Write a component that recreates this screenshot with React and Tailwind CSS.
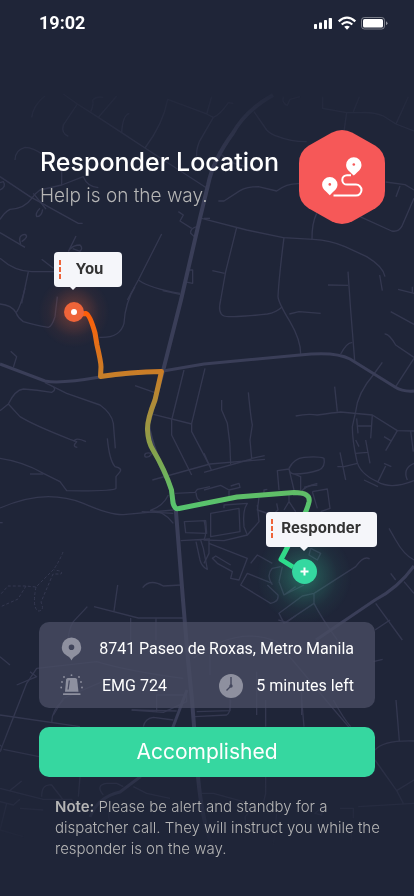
const minorRoads = [
  {
    offset: 'translate(0 0) scale(0.33333)',
    paths: [
      'M135 288Q100 315 95 352', 'M190 282L232 312L295 352L365 398L435 444L620 564', 'M232 312L190 375Q183 400 205 409',
      'M272 335Q282 315 278 300Q290 288 310 292', 'M295 352L350 288', 'M365 398Q368 345 388 340',
      'M435 444Q490 370 503 298L620 342L640 352L598 425Q588 450 590 470', 'M640 352Q660 345 685 308L700 310', 'M620 342L635 290',
      'M762 335L800 390Q815 405 835 410Q870 425 920 425', 'M850 290Q845 310 862 316L870 298L900 290', 'M968 290V325L1040 338H1080Q1120 335 1150 348L1188 372L1242 393',
      'M1040 338L1032 395', 'M1060 335L1078 290', 'M1188 372L1225 290',
      'M45 480Q45 450 75 442Q100 442 130 465', 'M0 530L90 590L235 670H248', 'M185 510V555L120 570Q105 580 95 595Q75 625 30 628Q15 635 0 658',
      'M185 555L250 530Q262 560 295 563', 'M100 580L138 627', 'M120 625Q105 640 110 650Q125 650 128 628', 'M0 570Q20 560 10 545L0 548',
      'M655 603H672L720 572Q740 560 775 560L830 573Q860 550 897 551', 'M1157 546L1215 554L1242 570', 'M1200 558L1188 590',
      'M1242 595L1205 680Q1195 697 1175 693L1080 650', 'M950 640Q935 670 936 720',
      'M535 635L550 645L540 663L575 685', 'M590 680Q570 685 572 700L585 712', 'M655 455Q690 490 720 495L775 515', 'M605 655L740 690L850 713L940 718Q990 720 1035 740L1100 770Q1150 800 1155 830',
    ],
  },
  {
    offset: 'translate(0 90) scale(0.33333)',
    paths: [
      'M0 428L75 472', 'M62 462Q52 435 75 433Q88 440 65 455', 'M228 438L205 485', 'M210 478Q220 465 240 465Q250 475 240 484L218 476',
      'M0 505Q45 545 95 545H165', 'M85 545L65 640', 'M125 508L160 535', 'M485 432L415 570L382 630', 'M415 570Q450 595 540 610', 'M560 540H578V580L552 575', 'M612 385H630',
      'M172 620L165 680Q155 710 145 712Q100 705 70 695Q55 685 48 668Q35 645 0 642', 'M48 668Q60 655 75 595', 'M405 590Q375 640 372 700Q360 745 298 742',
      'M488 602L540 613', 'M32 784L50 800L40 832',
    ],
  },
  {
    offset: 'translate(204 90) scale(0.33333)',
    paths: [
      'M98 412L65 545L50 630Q40 670 60 678Q75 684 190 672Q215 668 235 650', 'M25 542L62 550', 'M240 442Q225 560 222 620Q224 640 258 695Q290 750 290 792',
      'M350 670L285 665L256 672', 'M527 555L535 602', 'M432 545L440 660L452 812', 'M372 585L432 586', 'M582 598L630 610M625 590V610',
    ],
  },
  {
    offset: 'translate(0 290) scale(0.33333)',
    paths: [
      'M135 278L200 310L300 345Q335 370 340 400L346 475', 'M0 362L25 342Q45 300 70 297Q110 300 155 307Q170 300 160 290', 'M25 342L60 380Q100 405 210 448L230 455Q215 470 232 472',
      'M222 455Q225 440 258 455', 'M322 445Q328 510 345 530Q370 535 358 548L348 560V595Q340 604 200 602L180 575Q150 560 130 550Q70 515 0 505', 'M90 552H130',
      'M552 240L515 390V435L575 555', 'M615 235L575 400V425L630 530', 'M405 287L465 308', 'M460 373L575 402', 'M455 490Q430 485 435 500Q445 505 455 492', 'M457 570L630 522L795 508',
    ],
  },
  {
    offset: 'translate(204 290) scale(0.33333)',
    paths: [
      'M410 192Q430 155 445 158', 'M535 217L510 252Q460 310 455 365L445 410Q445 450 458 510Q465 550 520 575Q560 600 630 572', 'M560 65L630 103', 'M542 132Q555 130 575 165L630 202',
      'M630 205L575 290', 'M275 378Q310 370 340 375Q390 368 410 366L505 375L580 422L630 423', 'M392 290L400 365', 'M505 375L500 445M460 408H502', 'M580 422L545 482M540 440L560 452',
      'M620 423L628 485', 'M133 307Q140 380 145 405L138 450L143 505L182 497', 'M53 330V360L70 400Q80 460 80 522', 'M0 490L22 540', 'M0 547L143 507',
      'M408 487L425 570M400 530H420L460 520', 'M458 385L462 430M455 450L465 470M455 490L490 487M485 450L498 520', 'M540 520L562 530M545 528L522 575M480 570L522 590',
      'M610 570Q595 535 630 520', 'M255 535Q270 505 300 502Q345 498 360 505Q365 530 345 540Q310 552 270 552Q255 550 255 535M255 537L220 542L225 600M255 537L270 600M270 552L290 560V600M300 592L340 580',
    ],
  },
  {
    offset: 'translate(0 460) scale(0.33333)',
    paths: [
      'M0 144Q80 110 145 110Q200 110 250 130Q330 165 370 164Q410 160 520 150', 'M450 152Q490 150 520 190M450 152Q490 138 505 105', 'M425 155L520 160',
      'M525 100L585 97L592 88L630 80M588 98Q590 120 600 122', 'M553 185L617 182L620 220L557 218Z', 'M542 242L630 237M588 245L600 300Q605 320 622 328L610 265L602 240',
      'M543 375L490 378Q450 355 428 383', 'M353 375L342 453', 'M282 440L415 474H550', 'M392 474V540M468 474V540', 'M262 440L220 485Q205 510 205 540', 'M0 188H8',
    ],
  },
  {
    offset: 'translate(204 460) scale(0.33333)',
    paths: [
      'M0 90L50 76L75 90L108 82L105 70L80 78', 'M20 160L105 145L108 215L20 230Z', 'M0 180Q10 220 0 240L60 242L130 225L165 185L160 135', 'M60 145V135L130 130Q115 150 120 200L130 225', 'M75 92V112',
      'M180 108V90L190 88M165 112L160 150L205 165L222 150L218 130M240 150L255 125L275 155M255 105V125', 'M325 95L370 87L378 145L350 155M325 95L340 145',
      'M15 240V280L0 310M15 250L130 295L105 360L80 355L85 335L40 310L25 295L35 288L80 315', 'M140 310L160 285L205 310M205 370L130 340L110 375L200 430Q225 425 222 405L190 375',
      'M205 375Q185 345 205 325L230 320M225 365L235 320M225 365L240 405L275 380M300 375L240 405', 'M320 265L350 280L340 300L315 285L320 265', 'M497 297Q480 285 455 320L330 400L295 408L225 460L240 490L330 430V400',
      'M330 430Q350 470 400 540', 'M555 205L575 240Q600 285 630 300', 'M560 340L575 360M600 365L630 400', 'M515 430L595 540', 'M290 100Q300 75 340 75',
    ],
  },
  {
    offset: 'translate(30 615) scale(0.33333)',
    paths: [
      'M-90 125L-60 150M-90 410L-10 205L20 160L200 140Q300 170 460 190', 'M490 130Q620 30 740 80L800 150L900 270L960 340', 'M1058 133L1030 140', 'M680 170V300M815 230V300', 'M0 170L20 185L-40 210', 'M70 300L100 250L240 190',
      'M305 285L400 292L470 260V240H380V290', 'M500 290L600 287V250', 'M745 15L770 22L800 0', 'M1035 45L1080 15', 'M540 120V180',
    ],
  },
  {
    offset: 'translate(0 700) scale(0.33333)',
    paths: [
      'M0 45L240 80', 'M155 68Q155 30 190 0', 'M395 30L530 33', 'M430 80Q435 55 460 52L520 60', 'M585 50L680 45Q692 40 692 0', 'M797 0V80', 'M905 0L912 80', 'M1000 0Q1030 55 1052 80',
      'M1188 0L1198 122M1125 150Q1150 120 1242 123M1125 180L1190 272L1210 310M1190 272L1242 240M1075 320L1242 310', 'M0 155Q10 140 0 135M10 148L117 170',
      'M0 265L130 298H215L230 330M28 273L65 243M125 290Q125 250 155 255L190 300', 'M240 230L235 290', 'M0 305L40 315L60 298M60 325L130 330M20 310L0 390L70 410', 'M310 285Q285 255 320 250H350L370 260M400 260L440 280L510 295',
      'M605 280H640L730 305Q760 330 735 350L740 400M797 230V280L790 310', 'M945 340L970 320L965 345ZM1020 325H1060V355M1055 370V425', 'M330 320Q310 390 390 400', 'M820 435L830 340',
    ],
  },
]

const dottedTrails = ['M63 552Q60 560 54 569L36 587L26 586H8L0 595', 'M36 587Q32 607 38 611Q45 611 41 602L53 574H61Q64 571 54 570', 'M26 586L18 599L0 607']

function CityMap() {
  return (
    <svg className="absolute inset-0 h-full w-full" viewBox="0 0 414 896" fill="none" aria-hidden="true">
      <defs>
        <linearGradient id="edgeFade" x1="0" y1="0" x2="0" y2="896" gradientUnits="userSpaceOnUse">
          <stop offset="0.08" stopColor="#fff" stopOpacity="0" />
          <stop offset="0.22" stopColor="#fff" />
          <stop offset="0.8" stopColor="#fff" />
          <stop offset="0.95" stopColor="#fff" stopOpacity="0" />
        </linearGradient>
        <mask id="mapMask" maskUnits="userSpaceOnUse" x="0" y="0" width="414" height="896">
          <rect width="414" height="896" fill="url(#edgeFade)" />
        </mask>
        <linearGradient id="routeColor" x1="0" y1="313" x2="0" y2="560" gradientUnits="userSpaceOnUse">
          <stop offset="0" stopColor="#ff5e08" />
          <stop offset="0.24" stopColor="#c97d27" />
          <stop offset="0.43" stopColor="#a39340" />
          <stop offset="0.56" stopColor="#86a24c" />
          <stop offset="0.72" stopColor="#61bc66" />
          <stop offset="0.8" stopColor="#55c670" />
          <stop offset="1" stopColor="#2ddd8c" />
        </linearGradient>
        <radialGradient id="orangeGlow">
          <stop offset="0" stopColor="#f06236" stopOpacity="0.4" />
          <stop offset="0.35" stopColor="#f06236" stopOpacity="0.22" />
          <stop offset="0.7" stopColor="#f06236" stopOpacity="0.05" />
          <stop offset="1" stopColor="#f06236" stopOpacity="0" />
        </radialGradient>
        <radialGradient id="greenGlow">
          <stop offset="0" stopColor="#36d9a1" stopOpacity="0.4" />
          <stop offset="0.35" stopColor="#36d9a1" stopOpacity="0.2" />
          <stop offset="0.7" stopColor="#36d9a1" stopOpacity="0.05" />
          <stop offset="1" stopColor="#36d9a1" stopOpacity="0" />
        </radialGradient>
      </defs>
      <g mask="url(#mapMask)" strokeLinejoin="round">
        <g stroke="#343850" strokeWidth="4">
          {minorRoads.map((area) => (
            <g key={area.offset} transform={area.offset}>
              {area.paths.map((d) => <path key={d} d={d} />)}
            </g>
          ))}
        </g>
        <g stroke="#343850" strokeDasharray="3 2">
          {dottedTrails.map((d) => <path key={d} d={d} />)}
        </g>
        <g stroke="#3a3e58">
          <path d="M273 95Q246 110 233 133Q213 160 208 185L200 218L181 300L163 371L148 425Q152 450 170 485L176 512L183 600L188 660L192 700L198 777Q202 820 212 845" strokeWidth="4" />
          <path d="M0 364L45 381Q60 384 100 377L163 371L204 364L300 355Q335 351 350 359L395 387Q403 392 414 391" strokeWidth="3" />
          <path d="M414 566Q398 588 375 600L316 640" strokeWidth="3" />
          <path d="M187 690L173 727L140 777L120 792Q98 797 90 817" strokeWidth="3" />
        </g>
      </g>
      <circle cx="74" cy="312" r="36" fill="url(#orangeGlow)" />
      <circle cx="304" cy="576" r="48" fill="url(#greenGlow)" />
      <path
        d="M80 314L86 313.5Q90 315 95 333L97 345Q101 362 101 367L100.500 376.500Q130 372 161.500 371.500L155 400Q147 420 147.500 430Q148 442 153 450Q165 470 171.500 490L173 503Q175 510 179 508.500L237 497L294 492.500Q311 492.500 309 502Q307 510 304 515L287 548L281 559.500L293 567"
        stroke="url(#routeColor)" strokeWidth="5" strokeLinejoin="round"
      />
      <circle cx="74" cy="312" r="10" fill="#ee6439" />
      <circle cx="74" cy="312" r="3" fill="#fff" />
      <circle cx="304.500" cy="571.500" r="12.500" fill="#35d8a0" />
      <path d="M304.500 567.500v8M300.500 571.500h8" stroke="#fff" strokeWidth="2" />
    </svg>
  )
}

function DashMark() {
  return (
    <svg className="h-[19px] w-0.5 shrink-0" viewBox="0 0 2 19" aria-hidden="true">
      <path d="M1 0V19" stroke="#ee6439" strokeWidth="2" strokeDasharray="5 2" />
    </svg>
  )
}

function StatusIcons() {
  return (
    <svg className="h-4 w-[76px]" viewBox="0 0 76 16" fill="#fff" aria-label="Signal, Wi-Fi and battery">
      <rect x="2" y="9" width="3" height="5" rx="0.700" />
      <rect x="7" y="7.500" width="3" height="6.500" rx="0.700" />
      <rect x="12" y="5" width="3" height="9" rx="0.700" />
      <rect x="16.700" y="3" width="3.300" height="11" rx="0.700" />
      <g fill="none" stroke="#fff" strokeWidth="2.200">
        <path d="M26.700 6.300Q35 -1 43.300 6.300" />
        <path d="M29.700 9.500Q35 4.800 40.300 9.500" />
      </g>
      <path d="M32.200 11.800Q35 9.500 37.800 11.800L35 14.700Z" />
      <rect x="49.500" y="2.500" width="23" height="11.500" rx="2.800" fill="none" stroke="#fff" strokeOpacity="0.4" />
      <rect x="51" y="4" width="20" height="8.500" rx="1.500" />
      <path d="M74 6.300v4q1.500-.8 1.500-2t-1.500-2" opacity="0.5" />
    </svg>
  )
}

function RouteBadge() {
  return (
    <svg className="h-[94px] w-[86px] shrink-0" viewBox="0 0 86 94" fill="none" aria-hidden="true">
      <path d="M32.500 2.800Q43 -2.800 53.500 2.800L76.500 15.800Q86 22 86 33V61Q86 72 76.500 78.200L53.500 91.200Q43 96.800 32.500 91.200L9.500 78.200Q0 72 0 61V33Q0 22 9.500 15.800Z" fill="#f65858" />
      <path d="M52 45.200H48a4.700 4.700 0 0 0 0 9.400H57a5.500 5.500 0 0 1 0 11H34.500" stroke="#fff" strokeWidth="2" />
      <g fill="#fff">
        <path d="M54.800 27.200a7.700 7.700 0 0 1 7.700 7.700c0 4.300-3.500 6.600-7.700 10.600-4.200-4-7.700-6.300-7.700-10.600a7.700 7.700 0 0 1 7.700-7.700Z" />
        <path d="M30.800 46.900a7.700 7.700 0 0 1 7.700 7.700c0 4.300-3.500 6.600-7.700 10.600-4.200-4-7.700-6.300-7.700-10.600a7.700 7.700 0 0 1 7.700-7.700Z" />
      </g>
      <circle cx="54.800" cy="34.500" r="1.300" fill="#f65858" />
      <circle cx="30.800" cy="54.400" r="1.300" fill="#f65858" />
    </svg>
  )
}

function PinIcon() {
  return (
    <svg className="h-6 w-6 shrink-0" viewBox="0 0 24 24" fill="#8e909f" aria-hidden="true">
      <path fillRule="evenodd" d="M11.500 .5a9.700 9.700 0 0 1 9.700 9.700c0 4.700-3 7.300-6.500 9.200-1.500.9-2.300 2.300-3.200 4.100-.9-1.800-1.700-3.200-3.200-4.100C4.800 17.500 1.800 14.900 1.800 10.200A9.700 9.700 0 0 1 11.500 .5Zm0 7a2.800 2.800 0 1 0 0 5.600 2.800 2.800 0 0 0 0-5.600Z" />
    </svg>
  )
}

function SirenIcon() {
  return (
    <svg className="h-6 w-6 shrink-0" viewBox="0 0 24 24" fill="#8e909f" aria-hidden="true">
      <path d="M7.800 4H15.200Q16.800 4 17.100 5.500L18.500 17.800H5L6.100 5.500Q6.300 4 7.800 4Z" />
      <path d="M9.300 6.500L8.100 15.500" stroke="#484b62" strokeWidth="1.300" />
      <rect x="3" y="19.300" width="17.500" height="1.800" rx="0.500" />
      <circle cx="11.500" cy="1.200" r="0.900" /><circle cx="4" cy="3" r="0.900" /><circle cx="19" cy="3" r="0.900" />
      <circle cx="2" cy="8" r="0.900" /><circle cx="21" cy="8" r="0.900" /><circle cx="1.200" cy="13.500" r="0.900" /><circle cx="22" cy="13.500" r="0.900" />
    </svg>
  )
}

function ClockIcon() {
  return (
    <svg className="h-6 w-6 shrink-0" viewBox="0 0 24 24" aria-hidden="true">
      <circle cx="12" cy="12" r="12" fill="#8e909f" />
      <path d="M12 3V12L7.500 16.500" fill="none" stroke="#44485e" strokeWidth="1.400" />
      <circle cx="12" cy="12" r="1.700" fill="#44485e" />
    </svg>
  )
}

export default function App() {
  return (
    <main className="relative isolate flex min-h-screen flex-col overflow-hidden bg-[#1f2538] px-[39px] font-['Inter',sans-serif] text-white">
      <div className="absolute top-0 left-1/2 -z-10 h-[896px] w-[414px] -translate-x-1/2">
        <CityMap />
        <div className="absolute top-[252px] left-[54px] flex h-[35px] w-[68px] items-center rounded bg-[#f5f6fa] pl-[5px] text-[15px] font-bold text-[#333]">
          <DashMark />
          <span className="flex-1 pr-1 text-center">You</span>
          <span className="absolute top-full left-4 border-x-[3px] border-t-[3px] border-x-transparent border-t-[#f5f6fa]" />
        </div>
        <div className="absolute top-[512px] left-[266px] flex h-[35px] w-[111px] items-center rounded bg-[#f5f6fa] pb-0.5 pl-[5px] text-[15px] font-bold text-[#333]">
          <DashMark />
          <span className="flex-1 pr-2 text-center">Responder</span>
          <span className="absolute top-full left-[34px] border-x-4 border-t-4 border-x-transparent border-t-[#f5f6fa]" />
        </div>
      </div>

      <div className="-mr-[13px] flex h-[46px] items-center justify-between font-['Roboto',sans-serif]">
        <time className="text-lg font-bold">19:02</time>
        <StatusIcons />
      </div>

      <header className="-mr-[10px] mt-[84px] flex items-start justify-between">
        <div className="pt-4 pl-px">
          <h1 className="text-[25px] leading-8 font-medium whitespace-nowrap">Responder Location</h1>
          <p className="mt-1 text-[19px] leading-7 font-light text-[#b5b5b5]">Help is on the way.</p>
        </div>
        <RouteBadge />
      </header>

      <section className="mt-auto flex h-[86px] flex-col justify-center gap-[13px] rounded-[10px] bg-[#484c63]/80 px-[21px] pt-1 font-['Roboto',sans-serif] text-base leading-6">
        <div className="flex items-center justify-between">
          <PinIcon />
          <span>8741 Paseo de Roxas, Metro Manila</span>
        </div>
        <div className="flex items-center">
          <SirenIcon />
          <span className="ml-[18px]">EMG 724</span>
          <span className="ml-auto flex items-center gap-[13px]">
            <ClockIcon />
            5 minutes left
          </span>
        </div>
      </section>

      <button type="button" className="mt-[19px] h-[50px] shrink-0 rounded-[10px] bg-[#36d7a0] text-[21px]">Accomplished</button>

      <p className="-mr-4 mt-[19px] mb-[37px] pl-4 text-[15px] leading-[21px] font-light text-[#b5b5b5]">
        <strong className="font-semibold">Note:</strong> Please be alert and standby for a dispatcher call. They will instruct you while the responder is on the way.
      </p>
    </main>
  )
}
